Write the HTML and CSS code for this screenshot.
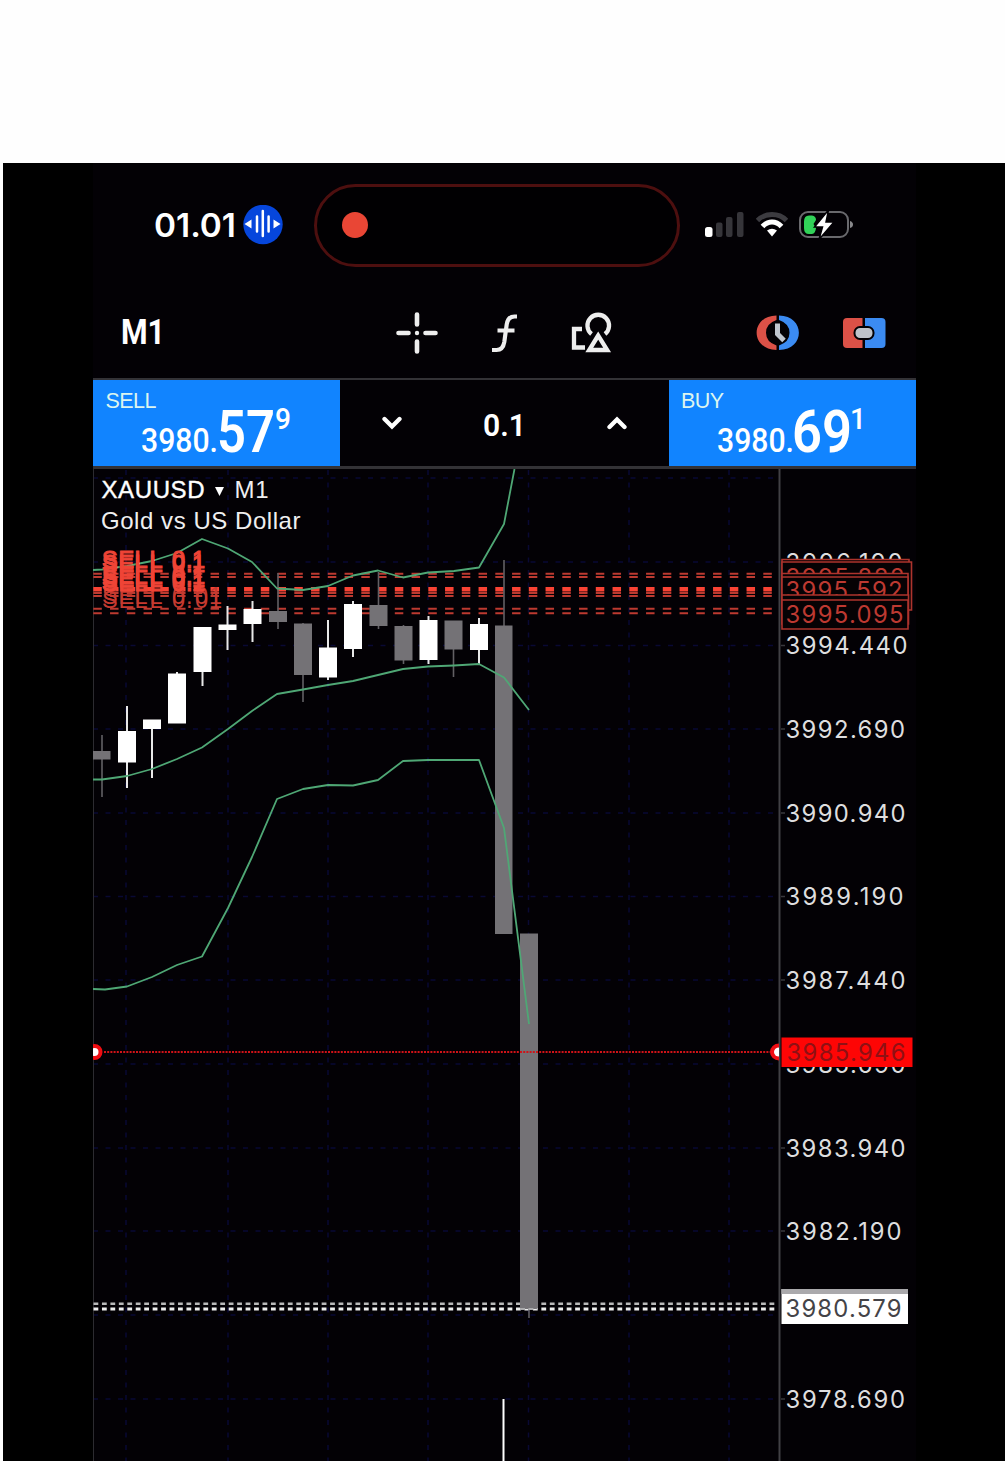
FILE: index.html
```html
<!DOCTYPE html>
<html lang="en">
<head>
<meta charset="utf-8">
<title>XAUUSD M1</title>
<link rel="stylesheet" href="styles.css">
</head>
<body>
<main class="stage">
<div class="phone">
  <header class="status">
    <svg class="time" width="82" height="40" viewBox="0 0 82 40"><text x="0" y="32" textLength="82" lengthAdjust="spacingAndGlyphs">01.01</text></svg>
    <svg class="voice" width="40" height="40" viewBox="0 0 40 40"><circle cx="20" cy="19.500" r="19.700" fill="#0646dc"/><path d="M19.800 6v25M14 11.500v15M25.600 11.500v15" stroke="#fff" stroke-width="2.500" stroke-linecap="round"/><path d="M1.500 19L8.500 14.500v9zM37.500 19L30.500 14.500v9z" fill="#fff"/></svg>
    <div class="island"><span class="rec"></span></div>
    <svg class="signal" width="39" height="26" viewBox="0 0 39 26"><rect x="0" y="15" width="7.500" height="10" rx="2.500" fill="#fff"/><g fill="#36353a"><rect x="11" y="10.500" width="6.500" height="14.500" rx="2"/><rect x="21" y="5" width="6.500" height="20" rx="2"/><rect x="32" y="0" width="6.500" height="25" rx="2"/></g></svg>
    <svg class="wifi" width="32" height="26" viewBox="0 0 32 26"><path d="M1.500 8.500C9 .5 23 .5 30.500 8.500" stroke="#3c3b40" stroke-width="4.800" fill="none"/><path d="M6.500 14.500C12 8.500 20 8.500 25.500 14.500" stroke="#fff" stroke-width="5" fill="none"/><path d="M11 18.500Q16 15 21 18.500L16 24.500z" fill="#fff"/></svg>
    <svg class="battery" width="55" height="30" viewBox="0 0 55 30"><rect x="1" y="2" width="48" height="25" rx="8" fill="none" stroke="#69696d" stroke-width="2"/><path d="M51 11q3 1 3 3.500t-3 3.500z" fill="#88888b"/><path d="M10 5.500h3q4 .5 4 4.500l-2.500 4 2.500 4q-.500 5.500-4 6h-3q-5 0-5-6v-6.500q0-6 5-6z" fill="#31d158"/><path d="M29.500 0L15.500 17h8l-3.500 12.500L35 12h-8L29.500 0z" fill="#fff" stroke="#030105" stroke-width="1.500"/></svg>
  </header>

  <nav class="toolbar">
    <svg class="frame" width="48" height="40" viewBox="0 0 48 40"><text x="0" y="31" textLength="44" lengthAdjust="spacingAndGlyphs">M1</text></svg>
    <svg class="cross" width="42" height="42" viewBox="0 0 42 42"><path d="M21 2.500v10M21 29.500v10M2.500 21h10M29.500 21h10" stroke="#eee" stroke-width="4.600" stroke-linecap="round"/><circle cx="21" cy="21" r="2.200" fill="#eee"/></svg>
    <svg class="func" width="30" height="40" viewBox="0 0 30 40"><path d="M27 3.500h-2.500q-6.500 0-7.800 8l-2.400 17.500q-1.300 8-7.800 8H2M7.500 17.500h17" fill="none" stroke="#eee" stroke-width="4.200"/></svg>
    <svg class="shapes" width="42" height="42" viewBox="0 0 42 42"><g fill="none" stroke="#eee" stroke-width="4.300"><path d="M21.500 22A10.800 10.800 0 1 1 35 22"/><path d="M12 17H4V35.500H15"/><path d="M28.200 23.500L19.200 38h18z"/></g></svg>
    <svg class="history" width="44" height="36" viewBox="0 0 44 36"><path d="M20.500 .5C-6 1-6 34.500 20.500 35v-4.500Q10 27 10 17.800T20.500 5z" fill="#dc5147"/><path d="M23 .5c26.500.5 26.500 34 0 34.500v-4.500q10.500-3.500 10.500-12.700T23 5z" fill="#3b8bf2"/><path d="M21.500 8.500v10.500l6.500 6.500" fill="none" stroke="#c0c6cf" stroke-width="5"/></svg>
    <svg class="trade" width="44" height="32" viewBox="0 0 44 32"><path d="M5 1h15.500v30H5q-4 0-4-4V5q0-4 4-4z" fill="#dc5147"/><path d="M23 1h16.500q4 0 4 4v22q0 4-4 4H23z" fill="#3b8bf2"/><rect x="12.500" y="10" width="19" height="12" rx="5.500" fill="#bfc3ca" stroke="#030105" stroke-width="2"/></svg>
  </nav>

  <section class="deal">
    <button class="quote"><svg width="247" height="86" viewBox="93 380 247 86">
      <text class="side" x="105.500" y="407.500" textLength="51">SELL</text>
      <text class="whole" x="141" y="452" textLength="77" lengthAdjust="spacingAndGlyphs">3980.</text>
      <text class="pips" x="217" y="452" textLength="58" lengthAdjust="spacingAndGlyphs">57</text>
      <text class="tick" x="275" y="429" textLength="16" lengthAdjust="spacingAndGlyphs">9</text>
    </svg></button>
    <div class="volume">
      <svg width="20" height="14" viewBox="0 0 20 14"><path d="M2.500 3L10 10.500 17.500 3" fill="none" stroke="#fff" stroke-width="4.300" stroke-linecap="round"/></svg>
      <svg class="lots" width="46" height="34" viewBox="0 0 46 34"><text x="1" y="29.500" textLength="43" lengthAdjust="spacingAndGlyphs">0.1</text></svg>
      <svg width="20" height="14" viewBox="0 0 20 14"><path d="M2.500 11L10 3.500 17.500 11" fill="none" stroke="#fff" stroke-width="4.300" stroke-linecap="round"/></svg>
    </div>
    <button class="quote"><svg width="247" height="86" viewBox="669 380 247 86">
      <text class="side" x="681" y="407.500" textLength="43">BUY</text>
      <text class="whole" x="717" y="452" textLength="77" lengthAdjust="spacingAndGlyphs">3980.</text>
      <text class="pips" x="792" y="452" textLength="60" lengthAdjust="spacingAndGlyphs">69</text>
      <text class="tick" x="850" y="429" textLength="16" lengthAdjust="spacingAndGlyphs">1</text>
    </svg></button>
  </section>

  <svg class="chart" width="823" height="992" viewBox="93 469 823 992">
    <g class="grid">
      <path d="M93 478H779M93 562H779M93 645.500H779M93 729H779M93 813H779M93 896.500H779M93 980H779M93 1064H779M93 1148H779M93 1231H779M93 1315H779M93 1399H779"/>
      <path d="M126 470V1461M228 470V1461M328 470V1461M428 470V1461M528.500 470V1461M629 470V1461M729 470V1461"/>
    </g>
    <path class="axis-ticks" d="M781 645.500h4M781 729h4M781 813h4M781 896.500h4M781 980h4M781 1148h4M781 1231h4M781 1399h4"/>
    <path class="edge" d="M93.500 469V1461"/>
    <path class="axis" d="M779.500 469V1461"/>

    <g class="orders">
      <path d="M93.300 573.700H776M93.300 577H776M93.300 593H776M93.300 596H776M93.300 608.800H776M93.300 613.300H776"/>
      <path class="hot" d="M93.300 589.300H776"/>
    </g>
    <g class="bidask"><path class="ask" d="M93.500 1303.800H777"/><path d="M93.500 1309H777"/></g>

    <g class="down">
      <path class="wick" d="M102 735V797M278 573V629M303 623V702M378.500 572V629M403.500 625V664M453.500 621V677M504 560V626M529 1309V1318"/>
      <path d="M93 751h17.500v8.500H93zM269 611h18v11h-18zM294 623.500h18v51.500h-18zM369.500 605h18v21h-18zM394.500 626h18v34.500h-18zM444.500 620.500h18v29h-18zM495 625.500h17.500V934H495zM520 933.500h18V1309h-18z"/>
    </g>
    <g class="up">
      <path class="wick" d="M127 706V788M152 720V778M177 672V723M202.500 627V686M227.500 606V650M252.500 601V642M328 620V680M353 601V657M428.500 616V664M479 618V664"/>
      <path d="M118 731h18v31.500h-18zM143 719.500h18v9.500h-18zM168 673.500h18v50h-18zM193.500 627h18v45h-18zM218.500 624.500h18v5.500h-18zM243.500 609h18v15h-18zM319 647.500h18v30h-18zM344 604h18v45h-18zM419.500 620h18v40h-18zM470 624h18v26h-18z"/>
    </g>
    <path class="ghost" d="M520 1309H538"/>
    <path class="volume-bar" d="M503.500 1399V1461"/>

    <g class="bands">
      <path d="M93 570L102 569.500 127 566 152 561 177 553 202 539 228 548.500 252 562 277 588.500 303 590 328 586 353 575.500 378 570.500 403 577.500 428 572.500 454 571 479 567.500 504 524 514.500 469"/>
      <path d="M93 779.500H102L127 776 152 769 177 759 202 747.500 228 729 252 711 277 694 303 689.500 328 685 353 681 378 675 403 669 428 666.500 454 665.500 479 664 504 677.500 529 710"/>
      <path d="M93 989L105 989.500 127 986.500 152 977 177 965 202 956.500 228 908 252 857 277 799 303 789 328 785 353 785.500 378 780 403 761 428 760H479L504 828 529 1024"/>
    </g>

    <g class="order-text">
      <text class="small-lot" x="102 118.500 134.500 149.500 165 172 186 195 209" y="603.500">SELL 0.01</text>
      <text class="small-lot" x="102 118.500 134.500 149.500 165 172 186 195 209" y="607.500">SELL 0.01</text>
      <text x="102 118.500 134.500 149.500 165 172 186 192" y="568">SELL 0.1</text>
      <text x="102 118.500 134.500 149.500 165 172 186 192" y="571.500">SELL 0.1</text>
      <text x="102 118.500 134.500 149.500 165 172 186 192" y="583.500">SELL 0.1</text>
      <text x="102 118.500 134.500 149.500 165 172 186 192" y="587">SELL 0.1</text>
      <text x="102 118.500 134.500 149.500 165 172 186 192" y="590.500">SELL 0.1</text>
    </g>

    <path class="alert" d="M104 1052H770"/>
    <circle cx="94.500" cy="1052" r="6" fill="#fff" stroke="#ef0d12" stroke-width="4"/>
    <path d="M779 1043.500A9 8.500 0 0 0 779 1060.500z" fill="#ef0d12"/><path d="M779 1047.500A5 4.500 0 0 0 779 1056.500z" fill="#fff"/>

    <g class="scale">
      <text x="785.500" y="571" textLength="117">3996.190</text>
      <text x="785.500" y="654" textLength="122">3994.440</text>
      <text x="785.500" y="738" textLength="119.500">3992.690</text>
      <text x="785.500" y="821.500" textLength="120">3990.940</text>
      <text x="785.500" y="905" textLength="118">3989.190</text>
      <text x="785.500" y="989" textLength="120">3987.440</text>
      <text x="785.500" y="1073" textLength="120">3985.690</text>
      <text x="785.500" y="1156.500" textLength="120">3983.940</text>
      <text x="785.500" y="1240" textLength="116">3982.190</text>
      <text x="785.500" y="1407.500" textLength="119.500">3978.690</text>
    </g>
    <g class="tags">
      <path d="M782 559.500h127v29H782z"/><path d="M782 562h129.500v48H782z"/>
      <text x="785.500" y="586" textLength="119">3995.882</text>
      <path d="M782 573.500h126v29H782z"/><path d="M782 577h126v29H782z"/>
      <text x="785.500" y="599" textLength="117">3995.592</text>
      <path d="M782 595h126.500v29H782z"/><path d="M782 600h126v29H782z"/>
      <text x="785.500" y="622.500" textLength="118">3995.095</text>
    </g>
    <rect x="781.500" y="1037.500" width="131" height="29.500" fill="#fe0505"/>
    <text class="alert-price" x="786.500" y="1060.500" textLength="119">3985.946</text>
    <rect x="781.500" y="1289" width="126.500" height="35" fill="#fff"/>
    <rect x="781.500" y="1289" width="126.500" height="5" fill="#aaa9ac"/>
    <text class="bid-price" x="785.500" y="1317" textLength="116">3980.579</text>

    <text class="symbol" x="101.500" y="498" textLength="103">XAUUSD</text>
    <path d="M215 487h9l-4.500 9z" fill="#fff"/>
    <text class="caption" x="234.500" y="498" textLength="34">M1</text>
    <text class="caption" x="101" y="528.500" textLength="199.500">Gold vs US Dollar</text>
  </svg>
</div>
</main>
</body>
</html>
```
FILE: styles.css
```css
* { box-sizing: border-box; }
body { margin: 0; padding: 163px 0 0 3px; background: #fefefe; font-family: "Liberation Sans", Arial, sans-serif; }
svg { display: block; flex: none; }
.stage { display: flex; height: 1298px; padding-left: 90px; background: #000; overflow: hidden; }
.phone { display: flex; flex-direction: column; width: 823px; background: #030105; }

.status { display: flex; align-items: center; height: 124px; padding-left: 61px; }
.time { fill: #fff; font: 600 33px Inter, sans-serif; }
.voice { margin-left: 7px; }
.island { display: flex; align-items: center; width: 366px; height: 83px; margin-left: 31px; padding-left: 25px; border: 3px solid #4d0f0f; border-radius: 42px; background: #010002; }
.rec { width: 26px; height: 26px; border-radius: 50%; background: #e94635; }
.signal { margin-left: 25px; }
.wifi { margin-left: 12px; }
.battery { margin-left: 11px; }

.toolbar { display: flex; align-items: center; height: 91px; padding-left: 28px; }
.frame { fill: #fff; font: 700 35.5px Roboto, sans-serif; }
.cross { margin-left: 227px; }
.func { margin-left: 52px; }
.shapes { margin-left: 50px; }
.history { margin-left: 144px; }
.trade { margin-left: 42px; }

.deal { display: flex; height: 91px; border-top: 2px solid #333236; border-bottom: 3px solid #333236; }
.quote { width: 247px; height: 86px; padding: 0; border: 0; background: #1184ff; }
.quote text { fill: #fff; font-family: Roboto, sans-serif; }
.quote .side { fill: #dcf5ef; font: 21.5px "Liberation Sans", sans-serif; }
.quote .whole { font-size: 34px; font-weight: 500; }
.quote .pips { font-size: 59px; font-weight: 600; }
.quote .tick { font-size: 29.5px; font-weight: 500; }
.volume { display: flex; flex: 1; align-items: center; justify-content: space-between; padding: 0 42px; }
.lots { fill: #fff; font: 600 31px Roboto, sans-serif; }

.chart { fill: none; }
.grid { stroke: #090934; stroke-width: 1.5; stroke-dasharray: 5 7.5; }
.axis-ticks { stroke: #39383d; stroke-width: 1.5; }
.edge { stroke: #2c2b30; }
.axis { stroke: #414045; stroke-width: 2; }
.orders { stroke: #bd3a30; stroke-width: 2; stroke-dasharray: 8.5 8.25; }
.orders .hot { stroke: #fa4334; stroke-width: 4.5; }
.bidask { stroke: #ededed; stroke-width: 3; stroke-dasharray: 4.8 3.65; }
.bidask .ask { stroke: #b9b9b9; stroke-width: 2.5; }
.down { fill: #747276; }
.up { fill: #fff; }
.down .wick { stroke: #626064; stroke-width: 1.6; }
.up .wick { stroke: #e8e8e8; stroke-width: 2; }
.ghost { stroke: #a9a9ab; stroke-width: 2; stroke-dasharray: 5 3.4; }
.volume-bar { stroke: #fff; stroke-width: 2; }
.bands { stroke: #4fa775; stroke-width: 1.8; stroke-linejoin: round; }
.order-text { fill: #ef4436; stroke: #ef4436; stroke-width: 1.1; font: 23.5px "Liberation Sans", sans-serif; }
.order-text .small-lot { fill: #c63a30; stroke: none; }
.alert { stroke: #d01318; stroke-width: 2; stroke-dasharray: 2 1.2; }
.scale { fill: #dededf; font: 23.8px Inter, sans-serif; }
.tags { fill: #bd3931; font: 23.8px Inter, sans-serif; }
.tags path { fill: #060204; stroke: #ad342d; stroke-width: 1.6; }
.alert-price { fill: #8f1014; font: 23.8px Inter, sans-serif; }
.bid-price { fill: #444347; font: 23.8px Inter, sans-serif; }
.symbol { fill: #fff; stroke: #fff; stroke-width: .4; font-size: 24px; }
.caption { fill: #efeff0; font-size: 24px; }
```
